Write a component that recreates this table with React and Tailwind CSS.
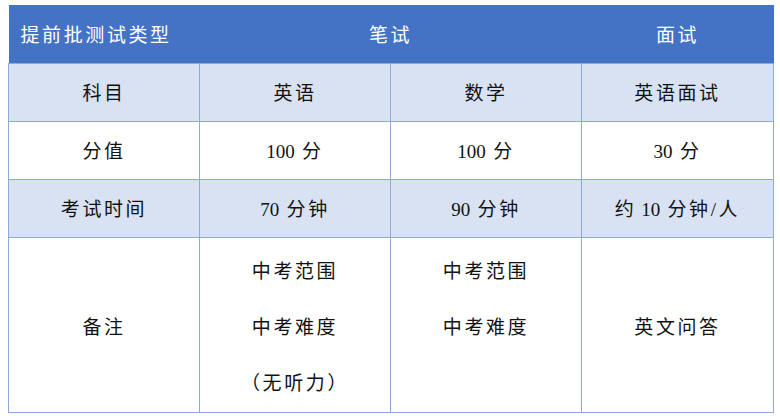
const Num = ({ children }) => <span className="tracking-normal">{children}</span>;

const rows = [
  { label: '科目', cells: ['英语', '数学', '英语面试'], shade: true },
  {
    label: '分值',
    cells: [<><Num>100</Num> 分</>, <><Num>100</Num> 分</>, <><Num>30</Num> 分</>],
    shade: false,
  },
  {
    label: '考试时间',
    cells: [<><Num>70</Num> 分钟</>, <><Num>90</Num> 分钟</>, <>约<Num> 10</Num> 分钟/人</>],
    shade: true,
  },
];

const cell = 'border border-[#8EAADB] text-center align-middle h-[58px] p-0 pt-[5px]';
const tall = 'border border-[#8EAADB] text-center p-0 pt-[6px] h-[174px] leading-[56px]';

export default function App() {
  return (
    <div className="w-[780px] h-[420px] bg-white pt-[5px] pl-[8px] font-['Liberation_Serif','Noto_Sans_CJK_SC',serif] text-[19px] tracking-[2.6px] text-[#111]">
      <table className="border-collapse table-fixed w-[765px]">
        <colgroup>
          <col className="w-[191px]" />
          <col className="w-[191px]" />
          <col className="w-[191px]" />
          <col className="w-[192px]" />
        </colgroup>
        <thead>
          <tr className="bg-[#4472C4] text-white h-[58px]">
            <th className="font-normal text-left pl-3 pt-[5px] border-0">提前批测试类型</th>
            <th colSpan={2} className="font-normal text-center pt-[5px] border-0">笔试</th>
            <th className="font-normal text-center pt-[5px] border-0">面试</th>
          </tr>
        </thead>
        <tbody>
          {rows.map((r) => (
            <tr key={r.label} className={r.shade ? 'bg-[#D9E2F3]' : 'bg-white'}>
              <td className={cell}>{r.label}</td>
              {r.cells.map((c, i) => (
                <td key={i} className={cell}>{c}</td>
              ))}
            </tr>
          ))}
          <tr className="bg-white">
            <td className={tall + ' align-middle'}>备注</td>
            <td className={tall + ' align-top'}>
              <div>中考范围</div>
              <div>中考难度</div>
              <div>（无听力）</div>
            </td>
            <td className={tall + ' align-top'}>
              <div>中考范围</div>
              <div>中考难度</div>
            </td>
            <td className={tall + ' align-middle'}>英文问答</td>
          </tr>
        </tbody>
      </table>
    </div>
  );
}
